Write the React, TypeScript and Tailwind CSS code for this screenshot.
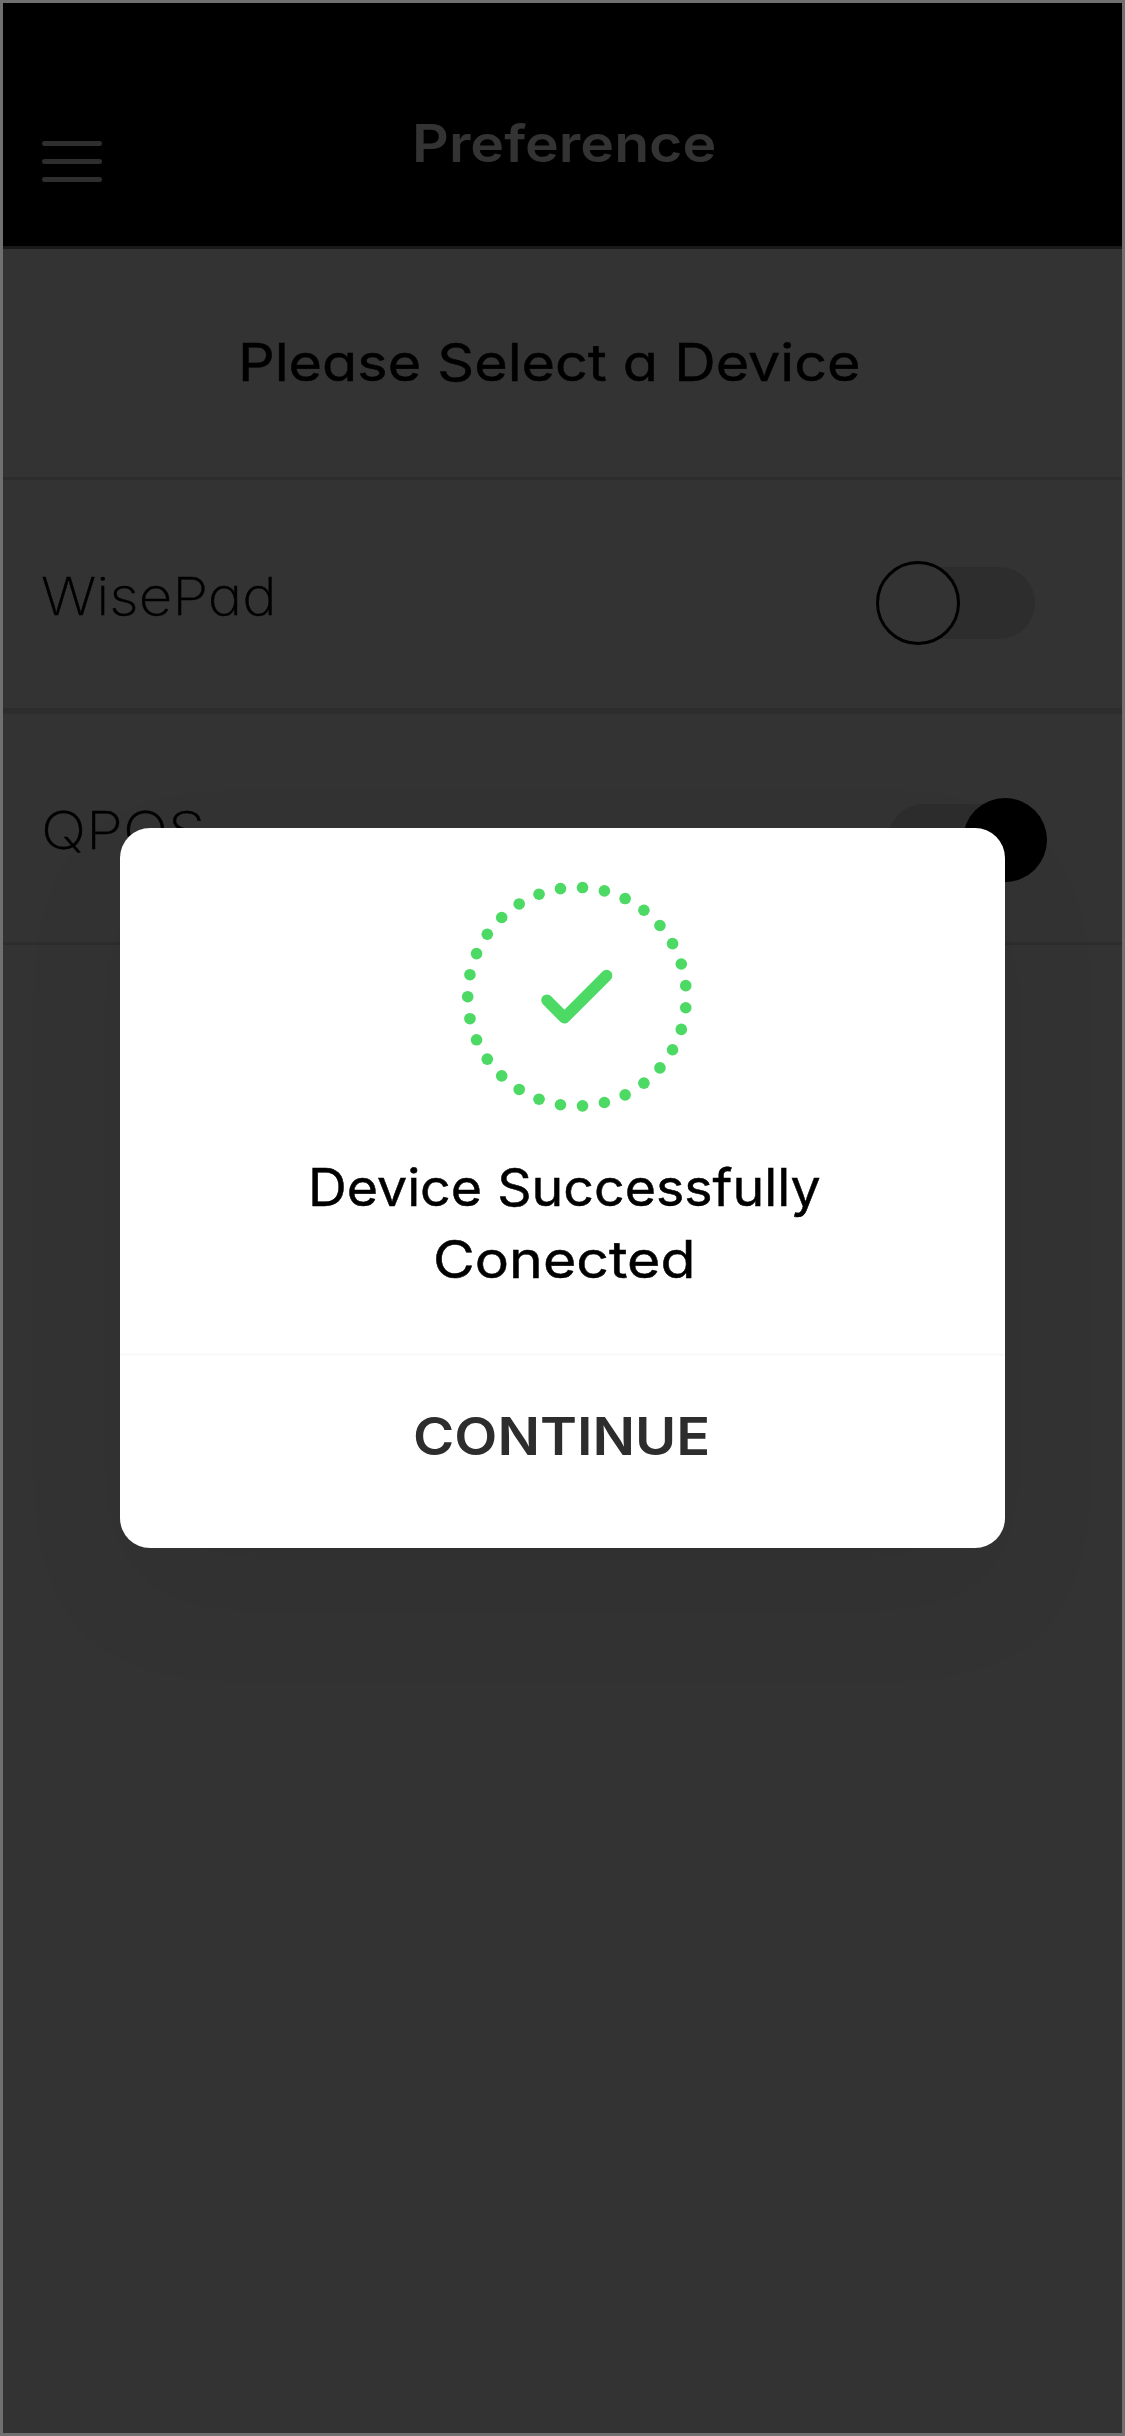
const DOT_COUNT = 31;

function MenuButton() {
  return (
    <button aria-label="Menu" className="mt-[138px] ml-[39px] flex w-[60px] flex-col gap-[13px]">
      <span className="h-[5px] rounded-full bg-[#2e2e2e]" />
      <span className="h-[5px] rounded-full bg-[#2e2e2e]" />
      <span className="h-[5px] rounded-full bg-[#2e2e2e]" />
    </button>
  );
}

function Toggle({ on }: { on: boolean }) {
  return (
    <span role="switch" aria-checked={on} className="relative h-[72px] w-[147px] rounded-full bg-[#2d2d2d]">
      {on ? (
        <span className="absolute -top-[6px] -right-[12px] size-[84px] rounded-full bg-black" />
      ) : (
        <span className="absolute -top-[6px] -left-[12px] size-[84px] rounded-full border-[3px] border-black bg-[#333333]" />
      )}
    </span>
  );
}

function SuccessMark() {
  const dots = Array.from({ length: DOT_COUNT }, (_, i) => {
    const angle = Math.PI + (i * 2 * Math.PI) / DOT_COUNT;
    return { cx: 120 + 109.3 * Math.cos(angle), cy: 119.7 + 109.3 * Math.sin(angle) };
  });
  return (
    <svg viewBox="0 0 240 240" className="mt-[49px] ml-[337px] size-[240px]">
      {dots.map((dot, i) => (
        <circle key={i} cx={dot.cx} cy={dot.cy} r="5.8" fill="#4cd964" />
      ))}
      <path
        d="M90 123.2L107.4 140.8L149.6 98.6"
        fill="none"
        stroke="#4cd964"
        strokeWidth="11.5"
        strokeLinecap="round"
        strokeLinejoin="round"
      />
    </svg>
  );
}

export default function App() {
  return (
    <div className="relative h-[2436px] w-[1125px] overflow-hidden border-[3px] border-[#707070] bg-[#333333] font-['Inter',sans-serif] text-[52px] leading-[60px] whitespace-nowrap text-black [font-feature-settings:'cv11']">
      <header className="flex h-[246px] items-start border-b-[3px] border-[#191919] bg-black">
        <MenuButton />
        <h1 className="mt-[111px] ml-[310px] origin-left scale-x-[1.1] font-semibold text-[#333333]">Preference</h1>
      </header>

      <main>
        <div className="flex h-[231px] items-start border-b-[3px] border-[#2d2d2d] pt-[84px] pl-[235px]">
          <h2 className="origin-left scale-x-[1.105] font-normal [-webkit-text-stroke:0.5px_black]">
            Please Select a Device
          </h2>
        </div>
        <div className="flex h-[231px] items-start justify-between border-b-[3px] border-[#2d2d2d] pr-[87px] pl-[38px]">
          <span className="mt-[87px] origin-left scale-x-[1.12] font-extralight [-webkit-text-stroke:0.4px_black]">WisePad</span>
          <span className="mt-[87px] flex">
            <Toggle on={false} />
          </span>
        </div>
        <div className="flex h-[234px] items-start justify-between border-y-[3px] border-[#2d2d2d] pr-[87px] pl-[38px]">
          <span className="mt-[87px] origin-left scale-x-[1.15] font-extralight [-webkit-text-stroke:0.4px_black]">QPOS</span>
          <span className="mt-[90px] flex">
            <Toggle on />
          </span>
        </div>
      </main>

      <div className="absolute inset-0 flex items-start justify-center pt-[825px]">
        <section
          role="dialog"
          className="flex h-[720px] w-[885px] flex-col rounded-[30px] bg-white shadow-[0_48px_120px_rgba(0,0,0,0.06)]"
        >
          <SuccessMark />
          <div className="mt-[35px] h-[201px] leading-[72px]">
            <p className="ml-[188px] w-fit origin-left scale-x-[1.032] [-webkit-text-stroke:0.5px_black]">
              Device Successfully
            </p>
            <p className="ml-[313px] w-fit origin-left scale-x-[1.1] [-webkit-text-stroke:0.5px_black]">Conected</p>
          </div>
          <button className="flex flex-1 items-start border-t-[3px] border-[#fafafa] pt-[51px] pl-[293px] font-semibold text-[#2d2d2d]">
            <span className="origin-left scale-x-[1.078]">CONTINUE</span>
          </button>
        </section>
      </div>
    </div>
  );
}
